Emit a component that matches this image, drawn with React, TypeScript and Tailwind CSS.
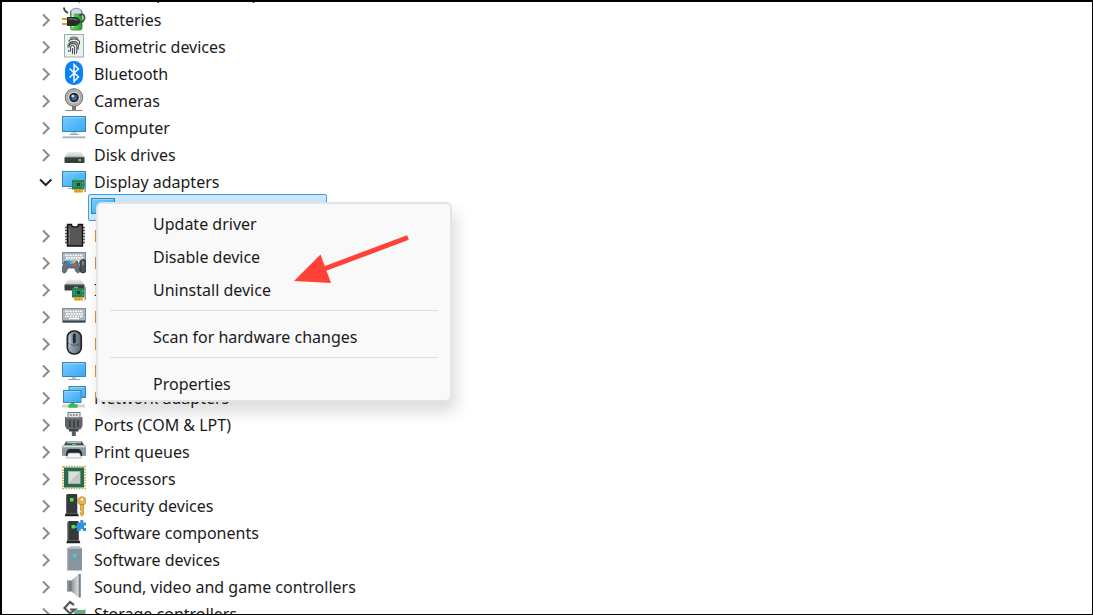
import React, { useState } from 'react'

interface Device {
  name: string
  icon: React.ReactNode
  child?: string
}

const Screen = ({ x = 0.5, y = 2.5, w = 23, h = 15 }: { x?: number; y?: number; w?: number; h?: number }) => (
  <>
    <rect x={x} y={y} width={w} height={h} fill="url(#screen)" stroke="#3f84ac" />
    <path d={`M${x + 1} ${y + 1}h${w - 2}`} stroke="#8ad2ff" strokeWidth="1" />
  </>
)

const Card = () => (
  <>
    <rect x="10" y="12" width="12.5" height="9.5" fill="#1f8256" />
    <path d="M12 11.5h4" stroke="#4fcb52" strokeWidth="1.5" />
    <rect x="14.5" y="14.5" width="4" height="4" fill="#0e4530" stroke="#5fa580" strokeWidth=".5" />
    <path d="M12 14v5M20.5 14v2M20.5 18v2" stroke="#63b483" strokeWidth=".8" />
    <path d="M12 23h9" stroke="#f0a51e" strokeWidth="3" />
    <path d="M14.5 21.5v3M17.5 21.5v3" stroke="#c97c0c" strokeWidth=".6" />
    <path d="M23.2 11v13" stroke="#8b9094" strokeWidth="1.4" />
  </>
)

const Disk = ({ y = 11 }: { y?: number }) => (
  <>
    <path d={`M6 ${y}h13l3.500 5.500h-20z`} fill="url(#lid)" />
    <rect x="2.500" y={y + 5} width="20" height="6" rx=".8" fill="#3a3d40" />
    <path d={`M3 ${y + 5.3}h19`} stroke="#777b7e" strokeWidth=".8" />
  </>
)

const Keys = ({ y = 5.5, h = 13.5 }: { y?: number; h?: number }) => (
  <>
    <rect x=".5" y={y} width="23" height={h} fill="#aab5bc" stroke="#7d8d97" />
    <path
      d={`M3 ${y + 2.8}h18M4 ${y + 5.3}h17M3 ${y + 7.8}h18`}
      stroke="#fff"
      strokeWidth="1.700"
      strokeDasharray="1.8 .7"
    />
    <path d={`M7 ${y + 10}h10`} stroke="#fff" strokeWidth="1.300" />
  </>
)

const Server = ({ x = 4 }: { x?: number }) => (
  <>
    <path d={`M${x} 3l1.500 -1h9l.8 1v18.500h-11.300z`} fill="#36393c" />
    <path d={`M${x - 0.5} 21.500h12.500l.8 2.700h-14z`} fill="#1f2224" />
    <path d={`M${x + 0.6} 3v18`} stroke="#62676b" strokeWidth="1" />
    <rect x={x + 4} y="6" width="3.500" height="3.500" fill="#3ff03c" />
  </>
)

const devices: Device[] = [
  {
    name: 'Audio inputs and outputs',
    icon: <path d="M8 8v11h4l6 5.500V3l-6 5z" fill="#70767b" />,
  },
  {
    name: 'Batteries',
    icon: (
      <>
        <rect x="8.500" y="4" width="11.500" height="20" rx="2" fill="url(#green)" stroke="#2f7d32" strokeWidth=".8" />
        <path d="M9 6c0-5 10.500-5 10.500 0v2H9z" fill="#d4d8ee" stroke="#7b8090" strokeWidth=".8" />
        <path d="M11 6v15" stroke="#c8f5bd" strokeWidth="1.500" />
        <path d="M2 1.500c0 4 2 4 4 5.500M15 16c6 1 8-2 7.500-5s-2-3-5-2" fill="none" stroke="#464646" strokeWidth="1.800" />
        <path d="M0 13h6M0 18h6" stroke="#d2a033" strokeWidth="1.800" />
        <path d="M5 11h6c5 0 7 2 7 4.500S15 20 11 20H5z" fill="#2b2b2b" />
        <path d="M6.500 13h5l4 1.200" stroke="#888" fill="none" strokeWidth="1" />
      </>
    ),
  },
  {
    name: 'Biometric devices',
    icon: (
      <>
        <rect x="2.500" y="1.500" width="19" height="22.500" fill="#eaf1f0" stroke="#8fb5ad" />
        <g fill="none" stroke="#4a5050" strokeWidth="1.100">
          <path d="M8 5.500c2-2 6-2 8 0M6.500 8.500c2-3.500 9-3.500 11 0v3M6.500 11.500c2-4 9-4 10 1l-.5 4M7 14.500c0-5 7.500-6 8 0l-.5 6M8.500 18.500v-4c.5-3 3.500-3 4 0v7M10.500 15v6" />
          <path d="M6 11.500v3M6.500 17l.5 2" />
        </g>
      </>
    ),
  },
  {
    name: 'Bluetooth',
    icon: (
      <>
        <rect x="3" y="1" width="18" height="24" rx="8.500" fill="#0a80fb" />
        <path d="M7.500 8.500l9 8.500-4.500 4.500v-17l4.500 4.500-9 8.500" fill="none" stroke="#fff" strokeWidth="1.500" />
      </>
    ),
  },
  {
    name: 'Cameras',
    icon: (
      <>
        <path d="M12 19v4" stroke="#777" strokeWidth="4" />
        <path d="M3.500 23.500h17" stroke="#8c8c8c" strokeWidth="1.200" />
        <circle cx="12" cy="10.500" r="8.800" fill="#b9b9b9" stroke="#6f6f6f" />
        <circle cx="12" cy="10.500" r="6.600" fill="#dcdcdc" stroke="#8e8e8e" strokeWidth=".8" />
        <circle cx="12" cy="10.500" r="4.800" fill="#2a2d35" />
        <circle cx="12" cy="10.500" r="2.800" fill="#466a98" />
        <circle cx="10.800" cy="9" r="1.300" fill="#d3e4f8" />
      </>
    ),
  },
  {
    name: 'Computer',
    icon: (
      <>
        <Screen />
        <path d="M9 18h6v2H9z" fill="#c6d3da" />
        <path d="M7.500 20.500h9" stroke="#8fa5b1" />
        <path d="M1.500 22h21l1.500 2.200H0z" fill="#9fb3c1" />
        <path d="M1.500 22.400h21" stroke="#d1dde5" strokeWidth=".8" />
      </>
    ),
  },
  {
    name: 'Disk drives',
    icon: (
      <>
        <Disk />
        <rect x="16.500" y="18" width="2.500" height="2.200" fill="#3dea3a" />
      </>
    ),
  },
  {
    name: 'Display adapters',
    child: 'Intel(R) UHD Graphics 620',
    icon: (
      <>
        <Screen y={3.5} />
        <path d="M6 20.500h5" stroke="#9db0bb" />
        <Card />
      </>
    ),
  },
  {
    name: 'Firmware',
    icon: (
      <>
        <path d="M3 5.500h20M3 8.500h20M3 11.500h20M3 14.500h20M3 17.500h20M3 20.500h20" stroke="#545454" strokeWidth="1.600" />
        <path d="M5.500 2.500h4c0 3.500 7 3.500 7 0h4v21.500h-15z" fill="#575757" stroke="#111" strokeWidth="1.400" />
        <path d="M7.500 7v14.500" stroke="#7a7a7a" />
      </>
    ),
  },
  {
    name: 'Human Interface Devices',
    icon: (
      <>
        <Keys y={3.5} h={11} />
        <path
          d="M3 12h12c2 3 3 7 2.500 11-1 1.500-3 1-4-1.500l-1-2.500H6l-1.500 3c-1 2.500-3 2.500-4 1C0 19 1 15 3 12z"
          fill="#65717c"
          stroke="#3d4750"
          strokeWidth=".7"
        />
        <path d="M5 12h3v3H5z" fill="#1e90e8" />
        <path d="M8 12h4v3H8z" fill="#37b8f3" />
        <circle cx="12" cy="12.500" r="1.500" fill="#f5ba2a" />
        <circle cx="12.500" cy="16" r="1.300" fill="#e7503a" />
        <rect x="18" y="10.500" width="6" height="13.500" rx="3" fill="#4c555e" stroke="#262b31" strokeWidth=".8" />
        <path d="M21 12v4" stroke="#aab3bb" />
      </>
    ),
  },
  {
    name: 'IDE ATA/ATAPI controllers',
    icon: (
      <>
        <Disk y={3.5} />
        <Card />
      </>
    ),
  },
  {
    name: 'Keyboards',
    icon: (
      <>
        <Keys />
        <path d="M1 18.500h22" stroke="#39434a" strokeWidth="2" />
      </>
    ),
  },
  {
    name: 'Mice and other pointing devices',
    icon: (
      <>
        <rect x="5.300" y="1" width="14" height="23" rx="6.500" fill="url(#steel)" stroke="#1f2225" strokeWidth="1.600" />
        <path d="M6 13c3 3 10 3 12.500 0" fill="none" stroke="#3e464e" strokeWidth=".8" />
        <rect x="10.800" y="3.500" width="3" height="10" rx="1.400" fill="#24282d" />
        <path d="M8 5v11" stroke="#c3cdd7" />
      </>
    ),
  },
  {
    name: 'Monitors',
    icon: (
      <>
        <Screen y={5.5} h={14} />
        <path d="M10 20h4v2h-4z" fill="#b6c5ce" />
        <path d="M6 22.500h12" stroke="#8fa5b1" />
      </>
    ),
  },
  {
    name: 'Network adapters',
    icon: (
      <>
        <Screen x={7} y={2.5} w={16.5} h={11} />
        <Screen x={1.5} y={6.5} w={17.5} h={12} />
        <path d="M0 20.500h23v3H0z" fill="#d0d4d6" />
        <path d="M10.500 19v3" stroke="#36b54a" strokeWidth="4" />
        <path d="M6.500 22h9" stroke="#38bb4b" strokeWidth="3.500" />
      </>
    ),
  },
  {
    name: 'Ports (COM & LPT)',
    icon: (
      <>
        <rect x="6" y="1.500" width="12" height="5" fill="#e3e3e3" stroke="#777" />
        <path d="M8 4h8" stroke="#666" strokeWidth="1.500" strokeDasharray="1.500 1.500" />
        <path d="M3 6h17.500v9l-2 3.500h-13.500L3 15z" fill="#636669" />
        <path d="M4 6.700h15.500" stroke="#999" />
        <path d="M8 9v7M12 9v8M16 9v7" stroke="#3b3d3f" strokeWidth="1.600" />
        <rect x="7" y="18" width="9.500" height="2.500" fill="#424548" />
        <path d="M11.800 20v5" stroke="#5c5f62" strokeWidth="4" />
      </>
    ),
  },
  {
    name: 'Print queues',
    icon: (
      <>
        <path d="M4 3.500h16l2 3.500H2z" fill="#4b5054" />
        <path d="M5 4.500h14" stroke="#b9c1c6" strokeWidth="1.400" />
        <rect x="0" y="7" width="24" height="11" rx="1.500" fill="#8d989f" />
        <path d="M.5 8.500h23" stroke="#dbe1e5" strokeWidth="1.600" />
        <path d="M10 6.500h4" stroke="#37dd55" strokeWidth="1.400" />
        <path d="M4 16c0-3 2-5 4-5h8c2 0 4 2 4 5v2H4z" fill="#222629" />
        <path d="M6.500 15h11l2 5h-15z" fill="#f4f6f7" stroke="#8b9297" strokeWidth=".6" />
      </>
    ),
  },
  {
    name: 'Processors',
    icon: (
      <>
        <rect x="1" y="1.500" width="22" height="22" fill="none" stroke="#c6a34c" strokeWidth="1.600" strokeDasharray="1.500 1.200" />
        <rect x="2" y="2.500" width="20" height="20" fill="#286b4c" />
        <rect x="6.500" y="6.500" width="11.500" height="12" fill="#dcdfdd" stroke="#a6b8ae" />
        <path d="M7 18L17.500 7v11z" fill="#c3c9c6" />
      </>
    ),
  },
  {
    name: 'Security devices',
    icon: (
      <>
        <Server />
        <circle cx="20" cy="9" r="4.200" fill="#e9b44c" stroke="#b97f1d" strokeWidth=".7" />
        <circle cx="20" cy="7.500" r="1.200" fill="#fff" />
        <path d="M18.500 12.500h3v10l-1.500 1.700-1.500-1.500v-2l1-1-1-1.500z" fill="#e9b44c" stroke="#b97f1d" strokeWidth=".7" />
      </>
    ),
  },
  {
    name: 'Software components',
    icon: (
      <>
        <Server x={5.5} />
        <path d="M15 3.500h3.300V1h3v2.500H24v3h-2v2.500h2v3h-3.300V10h-2v2H15V9h-2V6.500h2z" fill="#2f94dd" />
      </>
    ),
  },
  {
    name: 'Software devices',
    icon: (
      <>
        <path d="M5 2.500L8 .5h9.500l2.500 2v22H5z" fill="#8a949c" />
        <path d="M5 2.800L8 .8h9.500l2.500 2z" fill="#bcc5cc" />
        <path d="M5.700 3v21" stroke="#aab3ba" strokeWidth="1.200" />
        <rect x="11" y="8" width="3.200" height="3.200" fill="#2fd8f0" />
      </>
    ),
  },
  {
    name: 'Sound, video and game controllers',
    icon: (
      <>
        <path d="M5 7.500h5v11H5z" fill="#757b80" />
        <path d="M6 8.500v9" stroke="#a9afb4" />
        <path d="M9.500 7.500L16.500 1v23.500l-7-6z" fill="url(#cone)" />
        <path d="M16.500 1h2.300v23.500h-2.300z" fill="#7c8287" />
      </>
    ),
  },
  {
    name: 'Storage controllers',
    icon: (
      <>
        <path d="M12 5L8 2 2.500 8 8 13.500l5-4H8" fill="none" stroke="#55585b" strokeWidth="2.200" />
        <path d="M12 12l3-2h8v8H12z" fill="#5fae80" />
        <path d="M23 9v9" stroke="#8b9094" />
      </>
    ),
  },
]

const menuGroups = [['Update driver', 'Disable device', 'Uninstall device'], ['Scan for hardware changes'], ['Properties']]

const Chevron = ({ open }: { open: boolean }) => (
  <svg viewBox="0 0 16 16" className="h-4 w-4" fill="none" strokeWidth="2">
    {open ? <path d="M2 5.500l5.700 5.500 5.700-5.500" stroke="#262626" /> : <path d="M5 2.500l5.800 5.700-5.800 5.800" stroke="#8c8c8c" />}
  </svg>
)

const DeviceIcon = ({ children }: { children: React.ReactNode }) => (
  <svg viewBox="0 0 24 27" className="h-[27px] w-6 shrink-0" aria-hidden="true">
    {children}
  </svg>
)

const App = () => {
  const [expanded, setExpanded] = useState<string[]>(['Display adapters'])

  const toggle = (name: string) => {
    setExpanded((prev) => (prev.includes(name) ? prev.filter((n) => n !== name) : [...prev, name]))
  }

  return (
    <div className="relative h-screen overflow-hidden border-t-2 border-r border-b border-l-2 border-black bg-white font-['Noto_Sans',sans-serif] text-base text-[#1b1b1b]">
      {/* shared fills for the device icons */}
      <svg className="absolute h-0 w-0" aria-hidden="true">
        <defs>
          <linearGradient id="screen" x1="0" y1="0" x2="1" y2="1">
            <stop offset="0" stopColor="#7accfc" />
            <stop offset="1" stopColor="#36a9f8" />
          </linearGradient>
          <linearGradient id="lid" x1="0" y1="0" x2="0" y2="1">
            <stop offset="0" stopColor="#eeeeee" />
            <stop offset="1" stopColor="#bfc2c4" />
          </linearGradient>
          <linearGradient id="green">
            <stop offset="0" stopColor="#79e06a" />
            <stop offset="1" stopColor="#1c9a2c" />
          </linearGradient>
          <linearGradient id="steel">
            <stop offset="0" stopColor="#a7b5c3" />
            <stop offset="1" stopColor="#5a6775" />
          </linearGradient>
          <linearGradient id="cone">
            <stop offset="0" stopColor="#8d9499" />
            <stop offset="1" stopColor="#dfe3e6" />
          </linearGradient>
        </defs>
      </svg>

      <ul className="-mt-[23px]">
        {devices.map((device) => {
          const open = expanded.includes(device.name)
          return (
            <li key={device.name}>
              <div className="flex h-[27px] items-center gap-2 pl-9">
                <button aria-label={`Toggle ${device.name}`} aria-expanded={open} onClick={() => toggle(device.name)}>
                  <Chevron open={open} />
                </button>
                <DeviceIcon>{device.icon}</DeviceIcon>
                <span className="whitespace-nowrap">{device.name}</span>
              </div>
              {open && device.child && (
                <div className="-mt-px mb-px ml-[86px] flex h-[27px] w-fit items-center gap-2 rounded-xs border border-[#3c9ce6] bg-[#cce8ff] pr-2 pl-0.5">
                  <DeviceIcon>
                    <Screen y={4.5} />
                  </DeviceIcon>
                  <span className="whitespace-nowrap">{device.child}</span>
                </div>
              )}
            </li>
          )
        })}
      </ul>

      {/* Context menu */}
      <div
        role="menu"
        className="absolute top-[200px] left-[94px] w-[356px] rounded-md border-2 border-[#e4e4e4] bg-[#f9f9f9] px-3 pt-[3px] shadow-[4px_10px_16px_rgba(0,0,0,0.14)]"
      >
        {menuGroups.map((group, i) => (
          <div key={i} className={i > 0 ? 'mt-1 border-t border-[#dfdfdf] pt-[9px]' : ''}>
            {group.map((item) => (
              <button key={item} role="menuitem" className="flex h-[33px] w-full items-center pl-[43px] whitespace-nowrap">
                {item}
              </button>
            ))}
          </div>
        ))}
      </div>

      {/* Arrow to the uninstall entry */}
      <svg className="pointer-events-none absolute top-[232px] left-[292px] h-[50px] w-[116px]" viewBox="0 0 116 50" aria-hidden="true">
        <path d="M30 35L114 3.500" stroke="#ff4238" strokeWidth="5" />
        <path d="M0 47L26.500 20.500 37 49z" fill="#ff4238" />
      </svg>
    </div>
  )
}

export default App
